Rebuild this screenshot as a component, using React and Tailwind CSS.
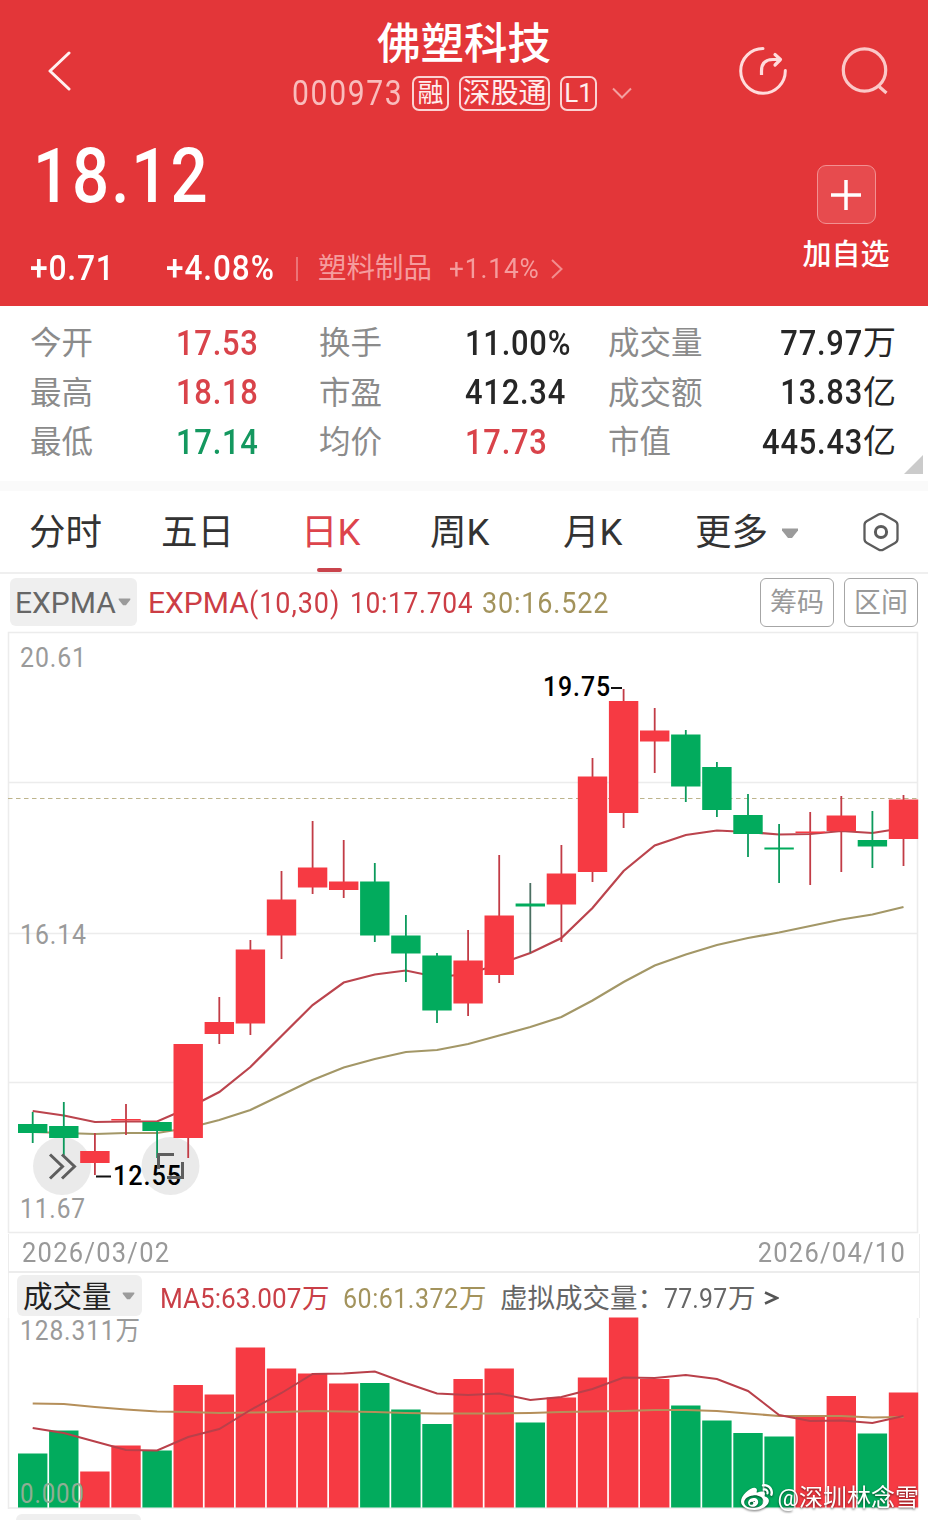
import clsx from "clsx";
import { FaWeibo } from "react-icons/fa";

const RED = "#f63a43";
const GREEN = "#02ab5d";
const FIRST_X = 32.7;
const STEP = 31.1;
const BODY_W = 29.4;

// [up, bodyTop, bodyBottom, high, low, volumeTop]
const CANDLES = [
  [0, 1124, 1133, 1112, 1143, 1453.5],
  [0, 1126, 1138, 1102, 1155, 1430.5],
  [1, 1151, 1163, 1133, 1175, 1471.5],
  [1, 1119, 1120.5, 1104, 1135, 1445.5],
  [0, 1122, 1131, 1122, 1158, 1450.5],
  [1, 1044, 1138, 1044, 1158, 1385],
  [1, 1022, 1034, 997, 1044, 1394.5],
  [1, 949.5, 1023.5, 940, 1035, 1347.5],
  [1, 899.5, 935.5, 871, 959, 1368.5],
  [1, 867.5, 887.5, 821, 894, 1373.5],
  [1, 881.5, 890, 840, 898, 1383.5],
  [0, 881.5, 935.5, 863, 942, 1383],
  [0, 935.5, 953.5, 915, 982, 1409.5],
  [0, 955.5, 1010.5, 953, 1023, 1424],
  [1, 960.5, 1003.5, 930, 1016, 1379],
  [1, 915.5, 975, 855, 983, 1368.5],
  [0, 903.5, 906.5, 883, 953, 1422.5],
  [1, 873.5, 904.5, 845, 942, 1397.5],
  [1, 776.5, 872, 758, 882, 1377.5],
  [1, 701, 813, 689, 828, 1317.5],
  [1, 730.5, 741.5, 708, 773, 1379],
  [0, 734.5, 786.5, 730, 802, 1405.5],
  [0, 767, 810, 762, 817, 1420.5],
  [0, 815, 834, 794, 857, 1433],
  [0, 847.5, 849.5, 824, 883, 1436.5],
  [1, 831.5, 833, 812, 885, 1417],
  [1, 815.5, 831, 796, 872, 1396],
  [0, 840, 846.5, 811, 868, 1433.5],
  [1, 799.5, 839, 795, 866, 1392.5],
];

const EXP10 = [
  1111, 1115.5, 1122, 1121.5, 1121.5, 1108, 1092, 1067, 1036, 1005, 982.5, 974.5, 970.5, 977, 974,
  964, 953, 938, 908, 871, 845.5, 835, 830.5, 832, 834.5, 834, 831, 833, 828,
];
const EXP30 = [
  1132, 1133, 1134, 1133, 1133, 1128, 1120, 1110, 1095, 1080, 1067.5, 1059, 1052, 1050, 1044,
  1035.5, 1027, 1017, 1000.5, 982, 965.5, 954.5, 945, 938, 932.5, 926, 919.5, 914.5, 907,
];
const MA5 = [
  1428, 1433, 1441.5, 1450, 1450.5, 1437, 1429, 1410, 1393, 1374, 1373.5, 1371.5, 1383, 1393.5,
  1395, 1393.5, 1400, 1397, 1389, 1377.5, 1378, 1375, 1379, 1391, 1415, 1421, 1420.5, 1423, 1416,
];
const MA60 = [
  1403.5, 1404, 1407, 1409.5, 1411.5, 1412, 1413, 1412.5, 1412, 1411, 1411.5, 1412, 1413, 1413.5,
  1413.5, 1413.5, 1413, 1412, 1411.5, 1411, 1410, 1410, 1411, 1413.5, 1416, 1416, 1416, 1417.5, 1417,
];

const cx = (i) => FIRST_X + i * STEP;
const toPoints = (ys) => ys.map((y, i) => `${cx(i).toFixed(1)},${y}`).join(" ");

const STATS = [
  [
    { label: "今开", value: "17.53", tone: "up" },
    { label: "换手", value: "11.00%" },
    { label: "成交量", value: "77.97", unit: "万" },
  ],
  [
    { label: "最高", value: "18.18", tone: "up" },
    { label: "市盈", value: "412.34" },
    { label: "成交额", value: "13.83", unit: "亿" },
  ],
  [
    { label: "最低", value: "17.14", tone: "down" },
    { label: "均价", value: "17.73", tone: "up" },
    { label: "市值", value: "445.43", unit: "亿" },
  ],
];

const TABS = [
  { label: "分时", width: "w-[132px]" },
  { label: "五日", width: "w-[140px]" },
  { label: "日K", width: "w-[129px]", active: true },
  { label: "周K", width: "w-[133px]" },
  { label: "月K", width: "w-[132px]" },
];

// Digits are set slightly narrow with open tracking
function Num({ children, className = "scale-x-[.88] tracking-[.03em]" }) {
  return <span className={clsx("inline-block origin-left whitespace-nowrap", className)}>{children}</span>;
}

function Caret({ className }) {
  return (
    <svg viewBox="0 0 18 11" className={className}>
      <path d="M1 0.5h16v2l-6 7.5h-4L1 2.5z" fill="#9b9b9b" />
    </svg>
  );
}

function Badge({ children, className }) {
  return (
    <span
      className={clsx(
        "flex h-[35px] items-center justify-center rounded-[7px] border-2 border-[#fbd3d3] pt-px text-[#ffeded]",
        className
      )}
    >
      {children}
    </span>
  );
}

function Header() {
  return (
    <header className="h-[306px] bg-[#e33639] text-white">
      <div className="flex h-[118px]">
        <div className="w-[220px] pt-[51px] pl-[46px]">
          <svg viewBox="0 0 26 40" className="h-10 w-[26px]" fill="none" stroke="#fff0f0" strokeWidth="3">
            <path d="M23 2 4 20 23 38" strokeLinecap="round" strokeLinejoin="round" />
          </svg>
        </div>
        <div className="flex flex-1 flex-col items-center pt-[19px]">
          <h1 className="text-[43.5px] leading-[52px] font-medium">佛塑科技</h1>
          <div className="mt-[4px] flex h-[36px] w-[344px] items-center">
            <Num className="w-[120px] scale-x-[.86] pt-[2px] text-[35px] leading-[36px] tracking-[.055em] text-[#f9bcbc]">
              000973
            </Num>
            <Badge className="w-[37px] text-[26px]">融</Badge>
            <Badge className="ml-[10px] w-[91px] text-[28px]">深股通</Badge>
            <Badge className="ml-[10px] w-[37px] text-[26px]">L1</Badge>
            <svg viewBox="0 0 20 12" className="ml-[15px] h-3 w-5" fill="none" stroke="#f3a0a0" strokeWidth="2">
              <path d="M1 1.5 10 10.5 19 1.5" />
            </svg>
          </div>
        </div>
        <div className="flex w-[220px] gap-[50px] pt-[45px] pl-[30px]">
          <svg viewBox="0 0 52 52" className="h-[52px] w-[52px]" fill="none" stroke="#ffdcdc" strokeWidth="3">
            <path d="M25 3.600A22.300 22.300 0 1 0 47.300 25.500" strokeLinecap="round" />
            <path d="M23.500 30v-4q0-11.500 11.500-11.500h7" strokeWidth="3.200" />
            <path d="M37 9.500 42.500 14.500 37 20" strokeWidth="3.200" strokeLinecap="round" strokeLinejoin="round" />
          </svg>
          <svg viewBox="0 0 52 52" className="h-[52px] w-[52px]" fill="none" stroke="#fbc8c8" strokeWidth="3.2">
            <circle cx="24.500" cy="25" r="21.200" />
            <path d="M39 41.500 46.500 48" />
          </svg>
        </div>
      </div>
      <div className="flex justify-between">
        <div className="flex flex-col">
          <Num className="mt-[18px] ml-[33px] scale-x-[.86] text-[76px] leading-[80px] font-medium tracking-[.03em]">
            18.12
          </Num>
          <div className="mt-[33px] flex h-[40px] items-center pl-[29px] text-[35px] leading-[42px]">
            <Num className="w-[137px] scale-x-[.91] pl-px font-medium tracking-[.025em]">+0.71</Num>
            <Num className="w-[130px] scale-x-[.9] font-medium tracking-[.03em]">+4.08%</Num>
            <span className="h-[24px] w-[2px] bg-[#ec7477]" />
            <span className="ml-[20px] w-[131px] text-[28.5px] text-[#f59c9d]">塑料制品</span>
            <Num className="w-[102px] scale-x-[.92] text-[28.500px] tracking-[.035em] text-[#f59c9d]">+1.14%</Num>
            <svg viewBox="0 0 12 20" className="h-5 w-3" fill="none" stroke="#f28d8e" strokeWidth="2">
              <path d="M1 1 10.500 10 1 19" />
            </svg>
          </div>
        </div>
        <div className="mt-[47px] mr-[36px] flex w-[92px] flex-col items-center">
          <button className="flex h-[59px] w-[59px] items-center justify-center rounded-[9px] border-[1.5px] border-[#f29091] bg-[#e74b4e]">
            <svg viewBox="0 0 30 30" className="h-[30px] w-[30px]" stroke="#fff" strokeWidth="3.5">
              <path d="M0 15h30M15 0v30" />
            </svg>
          </button>
          <span className="mt-[13px] text-[29px] leading-[37px] font-medium">加自选</span>
        </div>
      </div>
    </header>
  );
}

function Stats() {
  return (
    <section className="relative h-[175px] bg-white pt-[12px]">
      {STATS.map((row, r) => (
        <div key={r} className="flex h-[49.5px] items-center pr-[32px] pl-[30px]">
          {row.map((s) => (
            <div key={s.label} className={clsx("flex items-center", s.unit ? "flex-1" : "w-[289px]")}>
              <span className={clsx("pt-[3px] text-[31.5px] leading-[48px] text-[#8b8b8b]", !s.unit && "w-[146px]")}>
                {s.label}
              </span>
              <span
                className={clsx(
                  "flex items-center text-[35.500px] leading-[48px]",
                  s.tone === "up" && "font-medium text-[#d9434a]",
                  s.tone === "down" && "font-medium text-[#14985f]",
                  !s.tone && "text-[#262626]",
                  s.unit && "ml-auto"
                )}
              >
                <Num
                  className={clsx(
                    "font-medium",
                    s.unit ? "origin-right scale-x-[.87] tracking-[.025em]" : "scale-x-[.87] tracking-[.025em]"
                  )}
                >
                  {s.value}
                </Num>
                {s.unit && <span className="pt-px text-[33px]">{s.unit}</span>}
              </span>
            </div>
          ))}
        </div>
      ))}
      <svg viewBox="0 0 19 19" className="absolute right-[5px] bottom-[7px] h-[19px] w-[19px]">
        <path d="M19 0v19H0z" fill="#cbcbcb" />
      </svg>
    </section>
  );
}

function Tabs() {
  return (
    <nav className="flex h-[83px] items-center border-b-2 border-[#efefef] bg-white pl-[29px] text-[36.500px] leading-[84px] text-[#333]">
      {TABS.map((t) => (
        <span
          key={t.label}
          className={clsx("relative h-full", t.width, t.active && "text-[#dd444c]")}
        >
          {t.label}
          {t.active && (
            <i className="absolute bottom-0 left-[16px] h-[4px] w-[25px] rounded-full bg-[#c9444c]" />
          )}
        </span>
      ))}
      <span className="w-[86px] pt-[2px]">更多</span>
      <Caret className="mt-[4px] h-[11px] w-[18px]" />
      <svg viewBox="0 0 36 40" className="ml-[64px] h-10 w-9" fill="none" stroke="#5c5c5c" strokeWidth="2.300">
        <path
          d="M15.500 2.600Q18 1.200 20.500 2.600L32 9Q34.500 10.400 34.500 13V27Q34.500 29.600 32 31L20.500 37.400Q18 38.800 15.500 37.400L4 31Q1.500 29.600 1.500 27V13Q1.500 10.400 4 9Z"
        />
        <circle cx="18" cy="20" r="5.600" strokeWidth="3" />
      </svg>
    </nav>
  );
}

function IndicatorBar() {
  return (
    <div className="flex h-[58px] items-center pr-[10px] pb-[2px] pl-[10px] text-[30px] leading-[52px]">
      <div className="flex h-[48px] w-[127px] items-center rounded-[6px] bg-[#efefef] pl-[5px] text-[#666]">
        <span className="w-[103px] pt-[2px]">EXPMA</span>
        <Caret className="h-[8px] w-[13px]" />
      </div>
      <span className="ml-[11px] flex w-[202px] pt-[2px] text-[#cc3d45]">
        EXPMA
        <Num className="scale-x-[.9] tracking-[.035em]">(10,30)</Num>
      </span>
      <Num className="w-[132px] scale-x-[.88] pt-[2px] tracking-[.025em] text-[#cc3d45]">10:17.704</Num>
      <Num className="scale-x-[.9] pt-[2px] tracking-[.03em] text-[#a3935c]">30:16.522</Num>
      <span className="ml-auto flex h-[49px] w-[74px] items-center justify-center rounded-[6px] border-[1.5px] border-[#a6a6a6] pt-[2px] text-[27px] text-[#999]">
        筹码
      </span>
      <span className="ml-[10px] flex h-[49px] w-[74px] items-center justify-center rounded-[6px] border-[1.5px] border-[#a6a6a6] pt-[2px] text-[27px] text-[#999]">
        区间
      </span>
    </div>
  );
}

function AxisText({ x, y, width, fill = "#9a9a9a", size = 27.5, weight = 400, children }) {
  return (
    <text
      x={x}
      y={y}
      fill={fill}
      fontSize={size}
      fontWeight={weight}
      textLength={width}
      lengthAdjust="spacingAndGlyphs"
      letterSpacing="1"
    >
      {children}
    </text>
  );
}

function CandleChart() {
  return (
    <svg viewBox="0 631 928 603" className="block h-[603px] w-[928px]">
      <g stroke="#ececec" strokeWidth="1.500" fill="none">
        <path d="M8.500 1233V632.500H917.500V1233" />
        <path d="M8 782.500H918M8 933.500H918M8 1082.500H918M8 1232.500H918" />
      </g>
      <path d="M8 798.500H918" stroke="#bdb48c" strokeWidth="1.200" strokeDasharray="4.500 3.500" />
      <AxisText x="20" y="667" width="67">20.61</AxisText>
      <AxisText x="20" y="944" width="67">16.14</AxisText>
      <AxisText x="20" y="1218" width="66">11.67</AxisText>

      <g fill="#e8e8e8" fillOpacity=".9">
        <circle cx="62" cy="1166" r="29" />
        <circle cx="170.500" cy="1166" r="29" />
      </g>

      <polyline points={toPoints(EXP30)} fill="none" stroke="#a39767" strokeWidth="2.200" />
      <polyline points={toPoints(EXP10)} fill="none" stroke="#bb444d" strokeWidth="2.200" />
      {CANDLES.map(([up, top, bottom, high, low], i) => (
        <g key={i} fill={up ? RED : GREEN}>
          <rect
            x={cx(i) - 0.9}
            y={high}
            width="1.8"
            height={low - high}
            fill={up ? "#c23c46" : i === 16 ? "#4b6f62" : "#0c9a5c"}
          />
          <rect x={cx(i) - BODY_W / 2} y={top} width={BODY_W} height={bottom - top} />
        </g>
      ))}

      <path d="M611 688H622M96 1176.500H111" stroke="#111" strokeWidth="1.800" />
      <AxisText x="543" y="696" width="68" fill="#000" weight={500}>19.75</AxisText>
      <AxisText x="113" y="1185" width="69" fill="#000" weight={500}>12.55</AxisText>

      <g fill="none" stroke="#5e5e5e" strokeWidth="3">
        <path d="M50 1154.500 62.500 1166.500 50 1178.500M62 1154.500 74.500 1166.500 62 1178.500" />
        <path d="M158.500 1169V1154.500H174M182.500 1162V1177.500H167" />
      </g>
    </svg>
  );
}

function VolumePanel() {
  return (
    <section>
      <div className="mx-[8px] flex h-[45px] items-center border-x-[1.5px] border-[#efefef] pl-[8px] text-[27.500px] leading-[41px] whitespace-nowrap">
        <div className="flex h-[41px] w-[125px] items-center rounded-[6px] bg-[#efefef] pl-[6px]">
          <span className="w-[99px] pt-[3px] text-[29.500px] text-[#222]">成交量</span>
          <Caret className="h-[8px] w-[13px]" />
        </div>
        <span className="ml-[18px] flex w-[183px] pt-[5px] text-[#c93f47]">
          <Num className="w-[142px] scale-x-[.95]">MA5:63.007</Num>万
        </span>
        <span className="flex w-[157px] pt-[5px] text-[#a3935c]">
          <Num className="w-[116px] scale-x-[.91] tracking-[.02em]">60:61.372</Num>万
        </span>
        <span className="w-[164px] pt-[5px] text-[#666]">虚拟成交量：</span>
        <span className="flex w-[100px] pt-[5px] text-[#666]">
          <Num className="w-[64px] scale-x-[.9] tracking-[.01em]">77.97</Num>万
        </span>
        <svg viewBox="0 0 15 14" className="mt-[4px] h-[14px] w-[15px]" fill="none" stroke="#555" strokeWidth="2.500">
          <path d="M1 1.500 13 7 1 12.500" />
        </svg>
      </div>
      <svg viewBox="0 1318 928 191" className="block h-[191px] w-[928px] overflow-visible">
        <path d="M8.500 1318V1509M917.500 1318V1509M8 1508H918" stroke="#ececec" strokeWidth="1.500" />
        {CANDLES.map(([up, , , , , top], i) => (
          <rect
            key={i}
            x={cx(i) - BODY_W / 2}
            y={top}
            width={BODY_W}
            height={1507.5 - top}
            fill={up ? RED : GREEN}
          />
        ))}
        <polyline points={toPoints(MA60)} fill="none" stroke="#b58f5a" strokeWidth="2" />
        <polyline points={toPoints(MA5)} fill="none" stroke="#b9404a" strokeWidth="2" />
        <AxisText x="20" y="1340" width="121" size="27">128.311万</AxisText>
        <AxisText x="20" y="1503" width="65" size="27" fill="#8fae95">0.000</AxisText>
      </svg>
    </section>
  );
}

export default function App() {
  return (
    <div className="relative h-[1520px] w-[928px] overflow-hidden bg-white font-['Roboto','Noto_Sans_CJK_SC',sans-serif]">
      <Header />
      <Stats />
      <div className="h-[10px] bg-[#fafafa]" />
      <Tabs />
      <IndicatorBar />
      <div className="-mt-px">
        <CandleChart />
      </div>
      <div className="mx-[8px] flex h-[39px] items-center justify-between border-x-[1.5px] border-b-2 border-[#ececec] pr-[13px] pl-[13px] text-[28px] leading-[40px] text-[#999]">
        <Num className="scale-x-[.91] tracking-[.05em]">2026/03/02</Num>
        <Num className="origin-right scale-x-[.91] tracking-[.05em]">2026/04/10</Num>
      </div>
      <VolumePanel />
      <div className="mt-[5px] ml-[16px] h-[20px] w-[125px] rounded-[6px] bg-[#efefef]" />

      <div className="absolute right-[9px] bottom-[6px] flex items-center gap-[4px] text-white drop-shadow-[0_1px_1px_rgba(0,0,0,0.6)]">
        <FaWeibo className="h-[32px] w-[32px]" />
        <span className="text-[24px] leading-[30px] whitespace-nowrap">@深圳林念雪</span>
      </div>
    </div>
  );
}
